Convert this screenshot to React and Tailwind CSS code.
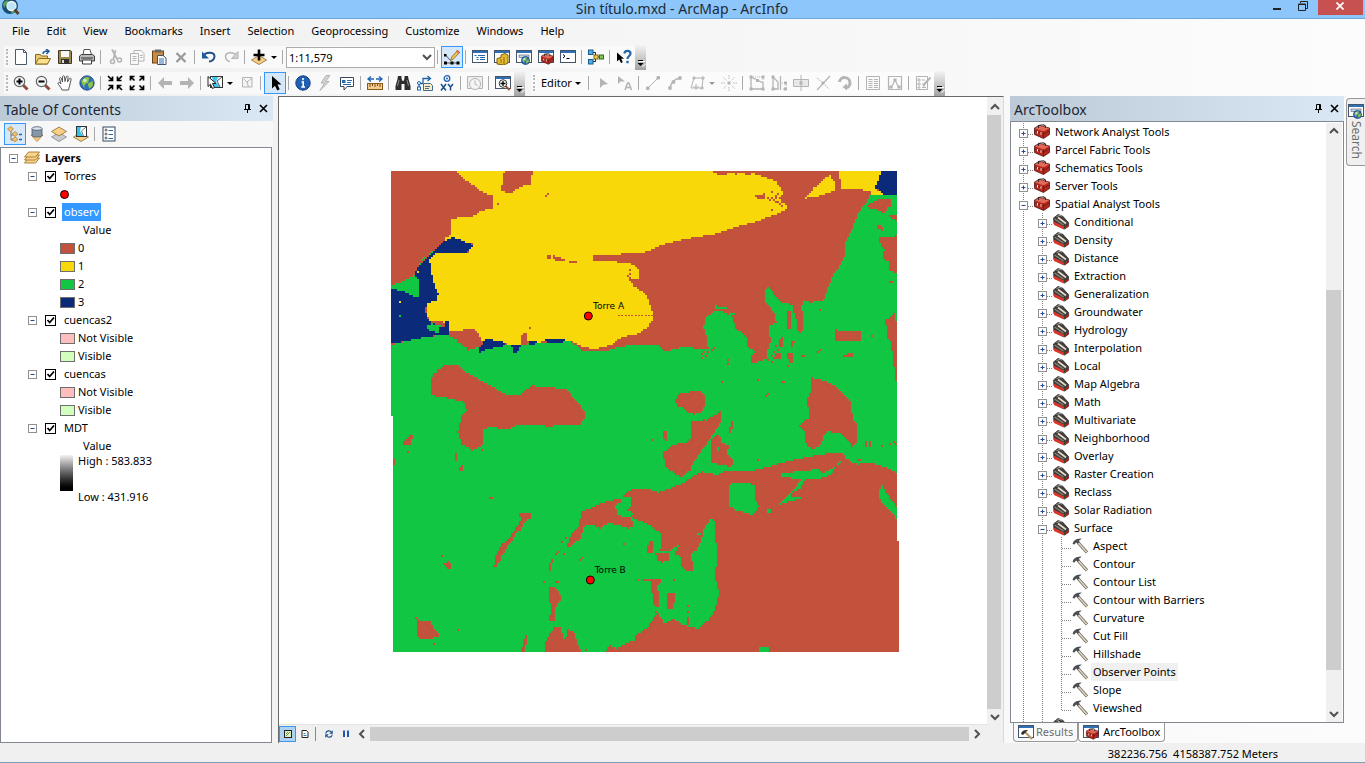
import { useState } from 'react';

const MENUS = ['File', 'Edit', 'View', 'Bookmarks', 'Insert', 'Selection', 'Geoprocessing', 'Customize', 'Windows', 'Help'];

const TOOLBOXES = ['Network Analyst Tools', 'Parcel Fabric Tools', 'Schematics Tools', 'Server Tools'];

const TOOLSETS = [
  'Conditional', 'Density', 'Distance', 'Extraction', 'Generalization', 'Groundwater', 'Hydrology',
  'Interpolation', 'Local', 'Map Algebra', 'Math', 'Multivariate', 'Neighborhood', 'Overlay',
  'Raster Creation', 'Reclass', 'Solar Radiation',
];

const SURFACE_TOOLS = [
  'Aspect', 'Contour', 'Contour List', 'Contour with Barriers', 'Curvature', 'Cut Fill', 'Hillshade',
  'Observer Points', 'Slope', 'Viewshed',
];

const OFF = '#b4b4b4';

/* small window used as a base by several toolbar icons */
const windowFrame = (
  <>
    <rect x="0.5" y="1.5" width="15" height="12" fill="#fff" stroke="#44546a" />
    <rect x="1" y="2" width="14" height="2" fill="#2f6fb5" />
  </>
);

const magnifier = (
  <>
    <path d="M10 10l4.5 4.500" stroke="#8f4a3a" strokeWidth="3" />
    <circle cx="6.500" cy="6.500" r="5.200" fill="#f3f6f8" stroke="#666" strokeWidth="1.200" />
  </>
);

const globe = (cx, cy, r) => (
  <>
    <circle cx={cx} cy={cy} r={r} fill="#2f6fc0" stroke="#1d4076" strokeWidth="0.8" />
    <path
      d={`M${cx - r * 0.8} ${cy - r * 0.2}q${r * 0.4} ${-r * 0.8} ${r * 1.1} ${-r * 0.6}l${-r * 0.1} ${r * 0.7}l${-r * 0.5} ${r * 0.3}l${-r * 0.1} ${r * 0.5}zM${cx + r * 0.1} ${cy + r * 0.1}l${r * 0.7} ${-r * 0.4}v${r * 0.7}l${-r * 0.5} ${r * 0.4}z`}
      fill="#8dc63f"
    />
    <circle cx={cx - r * 0.3} cy={cy - r * 0.35} r={r * 0.25} fill="#eaf6ff" opacity="0.7" />
  </>
);

const toolboxShape = (
  <>
    <path d="M0.500 4L5 1.500L15.500 4V10.500L9.500 14.500L0.500 10.500Z" fill="#b5281e" stroke="#4d1712" strokeWidth="0.8" />
    <path d="M0.800 4.200L9.500 7.500L15.200 4.200L5.500 1.800Z" fill="#e0695a" />
    <path d="M1 7L9.500 10.300L15.500 6.800M9.500 7.500V14" stroke="#6d1a14" fill="none" strokeWidth="0.9" />
    <path d="M4.500 4V1.500L9.500 0.800L11.500 2V4" stroke="#3a2a2a" fill="none" strokeWidth="1.100" />
    <path d="M3.500 7v2.500M7 8.200v2.500" stroke="#f4ded0" strokeWidth="1.100" />
  </>
);

const cursor = (x, y, fill) => (
  <path d={`M${x} ${y}v10l2.500-2.300l2 4.300l2-1l-2-4h3.500z`} fill={fill} />
);

const diamond = (y, fill) => (
  <path d={`M8 ${y - 4.5}L15.5 ${y}L8 ${y + 4.5}L0.5 ${y}Z`} fill={fill} stroke="#8a6a35" strokeWidth="0.8" />
);

const ICONS = {
  new: <path d="M2.500 0.500h8l3 3v12h-11zM10.500 0.500v3h3" fill="#fff" stroke="#4b5a6b" />,
  open: (
    <>
      <path d="M0.500 15V5.500h5l1 1.500h6V15z" fill="#e9c96b" stroke="#8a6a20" />
      <path d="M0.500 15l3-5.500h12L12.500 15z" fill="#f8e08e" stroke="#8a6a20" />
      <path d="M8 5c0-2 2-3 5-3M11 0l3 2.200L11.500 5" stroke="#1c5a9c" strokeWidth="1.500" fill="none" />
    </>
  ),
  save: (
    <>
      <path d="M1.500 1.500h12l1 1V14.500h-13z" fill="#9c8a4a" stroke="#3d3a2c" />
      <rect x="4" y="2" width="8" height="6" fill="#f5f5f5" />
      <rect x="4" y="10" width="8" height="4.500" fill="#2f2f2f" />
      <rect x="5" y="11" width="2" height="3" fill="#ddd" />
    </>
  ),
  print: (
    <>
      <path d="M4 6l1-5.500h6l1.500 5.500z" fill="#fff" stroke="#555" />
      <path d="M0.500 7l2-1.500h11l2 1.500v5h-15z" fill="#b9b9b9" stroke="#3d3d3d" />
      <path d="M3.500 11h9v4h-9z" fill="#fff" stroke="#3d3d3d" />
      <path d="M2 9h12" stroke="#333" />
    </>
  ),
  cut: (
    <>
      <path d="M5 0.500l5 9.500M8.500 1L6.500 10" stroke={OFF} strokeWidth="1.800" fill="none" />
      <circle cx="5.500" cy="12.500" r="2" fill="none" stroke={OFF} strokeWidth="1.500" />
      <circle cx="12.500" cy="11" r="2" fill="none" stroke={OFF} strokeWidth="1.500" />
    </>
  ),
  copy: <path d="M1.500 4.500h8v11h-8zM5 4V1.500h7l3 3V12h-5M3.500 7.500h4M3.500 9.500h4M3.500 11.500h4M11 6.500h2.500M11 8.500h2.500" fill="none" stroke={OFF} />,
  paste: (
    <>
      <rect x="1.500" y="2" width="11" height="12" fill="#c98b3f" stroke="#6b4316" />
      <rect x="4" y="0.500" width="6" height="3" fill="#666" />
      <path d="M6.500 6.500h5.500l3 2.500v6.500h-8.500z" fill="#fff" stroke="#41546b" />
      <path d="M8 10h5M8 12h5M8 14h5" stroke="#2f6fb5" />
    </>
  ),
  del: <path d="M3.500 4l9 9M12.500 4L3.500 13" stroke="#9a9a9a" strokeWidth="2.400" />,
  undo: (
    <>
      <path d="M2.500 6.500C5.500 2.500 13.500 3 13.500 7.500C13.500 10 11 12.500 8 12.500" stroke="#1e4f86" strokeWidth="1.900" fill="none" />
      <path d="M1 2.500V9.500H8z" fill="#1e5c9b" />
    </>
  ),
  redo: (
    <>
      <path d="M13.500 6.500C10.500 2.500 2.500 3 2.500 7.500C2.500 10 5 12.500 7 12.500" stroke={OFF} strokeWidth="1.500" fill="none" />
      <path d="M15 2.500V9.500H8.500z" fill="#cfcfcf" stroke={OFF} />
    </>
  ),
  add: (
    <>
      {diamond(11, '#f8cf83')}
      <path d="M8 0.500v11M2.500 6h11" stroke="#000" strokeWidth="2.600" />
    </>
  ),
  editTool: (
    <>
      <path d="M1.500 6l5.500 6M1.500 14h13" stroke="#555" fill="none" />
      <path d="M0 12.500h3v3H0zM6.500 12.500h3v3h-3zM12.500 12.500h3v3h-3zM0 5h2.500v2.500H0z" fill="#000" />
      <path d="M6.500 11.500l1.500-4L13.500 1.500l2 2L10 9.500z" fill="#f0c14f" stroke="#7a5a1a" strokeWidth="0.7" />
      <path d="M12.500 1.500l3 2.500" stroke="#d96b5b" strokeWidth="2" />
    </>
  ),
  tocWin: (
    <>
      {windowFrame}
      <path d="M2.500 6.500h2M6 6.500h7M4.500 8.500h2M8 8.500h5M4.500 10.500h2M8 10.500h5" stroke="#1f65b0" />
    </>
  ),
  catalogWin: (
    <>
      {windowFrame}
      <path d="M3 15V9.500l4-1V6l4-1.500L14 6v8l-4 2z" fill="#e7b92f" stroke="#7a5c0c" />
      <path d="M7 10v4M10 8v7" stroke="#8a6a10" />
    </>
  ),
  searchWin: (
    <>
      {windowFrame}
      <rect x="3" y="6" width="10" height="2.500" fill="#c5d9ec" stroke="#557" strokeWidth="0.6" />
      {globe(9.5, 11.5, 4)}
    </>
  ),
  toolboxWin: (
    <>
      {windowFrame}
      <g transform="translate(3 4) scale(0.78)">{toolboxShape}</g>
    </>
  ),
  python: (
    <>
      {windowFrame}
      <path d="M3 5.500l2 1.700L3 9" stroke="#000" fill="none" />
      <path d="M6.500 9.500h3" stroke="#000" />
    </>
  ),
  model: (
    <>
      <path d="M4 3.500h3.500V8H11M4 12.500h3.500V8" stroke="#222" fill="none" />
      <rect x="0.500" y="1" width="4.500" height="4.500" fill="#4fb0e8" stroke="#175a8c" />
      <rect x="0.500" y="10.500" width="4.500" height="4.500" fill="#4fb0e8" stroke="#175a8c" />
      <rect x="6" y="6" width="4" height="4" fill="#f2cf4a" stroke="#7d6410" />
      <rect x="11.500" y="6" width="4" height="4" fill="#7ec850" stroke="#376b1c" />
    </>
  ),
  help: (
    <>
      <path d="M1 3.500v9l2.200-2l1.800 3.500l1.800-0.800L5.200 9.800h2.800z" fill="#000" />
      <path d="M8.500 4.500C8.500 1 14.500 1 14.500 4.500C14.500 7 11.500 7 11.500 10" stroke="#2767a8" strokeWidth="2.200" fill="none" />
      <rect x="10.300" y="11.800" width="2.400" height="2.400" fill="#2767a8" />
    </>
  ),
  zoomIn: (
    <>
      {magnifier}
      <path d="M6.500 3.500v6M3.500 6.500h6" stroke="#000" strokeWidth="2" />
    </>
  ),
  zoomOut: (
    <>
      {magnifier}
      <path d="M3.500 6.500h6" stroke="#000" strokeWidth="2" />
    </>
  ),
  pan: (
    <path
      d="M5 15C4 12 1 9.500 0.800 8C1.500 6.500 3 8 4 9L2.500 3.500C3 2 4.200 2.500 4.600 4L5.500 7L5.500 1.500C6.200 0.300 7.400 0.500 7.500 2L8 6.500L9.300 1.500C10 0.500 11.300 1 11 2.500L10.500 7L12.500 3.500C13.500 2.700 14.500 3.500 14 5C13 8 12.500 12 11.500 15z"
      fill="#fff" stroke="#555"
    />
  ),
  globe: globe(8, 8, 7.2),
  fixedIn: (
    <path
      d="M1 1l4 4M15 1l-4 4M1 15l4-4M15 15l-4-4M5.500 1.500v4h-4M10.500 1.500v4h4M5.500 14.500v-4h-4M10.500 14.500v-4h4"
      stroke="#000" strokeWidth="1.700" fill="none"
    />
  ),
  fixedOut: (
    <path
      d="M1.500 1.500l4 4M14.500 1.500l-4 4M1.500 14.500l4-4M14.500 14.500l-4-4M1.500 5.500v-4h4M14.500 5.500v-4h-4M1.500 10.500v4h4M14.500 10.500v4h-4"
      stroke="#000" strokeWidth="1.700" fill="none"
    />
  ),
  back: <path d="M1 8l6-6v4h8v4H7v4z" fill={OFF} />,
  fwd: <path d="M15 8L9 2v4H1v4h8v4z" fill={OFF} />,
  select: (
    <>
      <rect x="3.500" y="1.500" width="12" height="11" fill="#fff" stroke="#333" />
      <path d="M5 2h6l-2 5l4 5H7z" fill="#39c6e8" />
      <path d="M15 2l-5 4l3 6" stroke="#555" fill="none" />
      <g stroke="#222" strokeWidth="1">{cursor(1, 1.5, '#fff')}</g>
    </>
  ),
  clearSel: <path d="M3.500 2.500h9.500v9.500h-9.500zM5 4l3 3l5-4M8 7l1.500 5" fill="#f3f3f3" stroke={OFF} />,
  pointer: <path d="M5 1v12.500l3-2.700l2.300 4.700l2.400-1.200L10.400 9.500h4.100z" fill="#000" />,
  info: (
    <>
      <circle cx="8" cy="8" r="7.200" fill="#1f5fb4" stroke="#123c7c" />
      <path d="M8 3v2.200M6.500 7h1.700v5M6.200 12h3.800" stroke="#fff" strokeWidth="1.600" fill="none" />
    </>
  ),
  bolt: <path d="M9 0.500L4 8h3.500L3 15.500L12 6.500H8.500L13 0.500z" fill="#d3d3d3" stroke={OFF} />,
  popup: (
    <>
      <path d="M1.500 2.500h13v9H8l-3 3.500v-3.500H1.500z" fill="#fff" stroke="#34495e" />
      <rect x="3" y="5" width="3.500" height="3" fill="#2a6bb0" />
      <path d="M8 5.500h5M8 7.500h4M4 9.500h8" stroke="#2a6bb0" />
    </>
  ),
  measure: (
    <>
      <path d="M1 4h6M15 4H9M4 1.500L1 4l3 2.500M12 1.500L15 4l-3 2.500" stroke="#1f65b0" strokeWidth="1.400" fill="none" />
      <rect x="0.500" y="8.500" width="15" height="6" fill="#f2cd8d" stroke="#8a5c1c" />
      <path d="M3 9v3M5.500 9v2M8 9v3M10.500 9v2M13 9v3" stroke="#7a4c12" />
    </>
  ),
  find: (
    <>
      <path d="M3 1h3.500v2.500L7.500 6h1l1-2.500V1H13l0.500 3L15.500 11v4h-6V9h-3v6h-6v-4L2.500 4z" fill="#2d2d2d" />
      <path d="M4 5L2.500 11M12 5l1.500 6" stroke="#8b8b8b" />
    </>
  ),
  route: (
    <>
      <path d="M2 13V8.500h4V3.500h7M10.500 1L13.500 3.500L10.500 6" stroke="#1f65a8" fill="none" strokeWidth="1.300" />
      <rect x="0.500" y="12" width="3" height="3" fill="#fff" stroke="#1f65a8" />
      <circle cx="2" cy="8" r="1.500" fill="#fff" stroke="#1f65a8" />
      <path d="M6.500 8.500h7l2 2v5h-9zM8 11.500h5M8 13.500h4" fill="#f7ecc8" stroke="#4a6a8a" />
    </>
  ),
  xy: (
    <>
      <circle cx="8" cy="3.500" r="2.800" fill="none" stroke="#1f65b0" strokeWidth="1.300" />
      <circle cx="8" cy="3.500" r="1" fill="#1f65b0" />
      <path d="M2 9l5 6.500M7 9l-5 6.500M9 9l2.500 3v3.500M14 9l-2.500 3" stroke="#1c4f8c" strokeWidth="1.500" fill="none" />
    </>
  ),
  time: (
    <>
      <path d="M0.500 1.500h15v12H0.500z" fill="#eee" stroke={OFF} />
      <circle cx="8" cy="9" r="5.500" fill="#f4f4f4" stroke={OFF} />
      <path d="M8 5.500V9l2.500 1.500" stroke={OFF} fill="none" />
    </>
  ),
  viewer: (
    <>
      {windowFrame}
      <path d="M10.500 11l4 4" stroke="#a0522d" strokeWidth="2" />
      <circle cx="8" cy="8.500" r="3.800" fill="#fff" stroke="#333" />
      <path d="M5.500 8.500h5M8 6v5" stroke="#000" strokeWidth="1.300" />
    </>
  ),
  eArrow: <path d="M5 3v10l3-3l5-1z" fill={OFF} />,
  eArrowA: (
    <>
      <path d="M1 1v8l2.500-2.500H8z" fill={OFF} />
      <path d="M8 15l2.500-7h1.500l2.500 7M9 12.500h4.500" stroke={OFF} strokeWidth="1.500" fill="none" />
    </>
  ),
  line: <path d="M3 13L13 3M1.500 12h2.500v2.500H1.500zM12 1.500h2.500V4H12z" stroke={OFF} fill={OFF} />,
  arc: <path d="M3 13C4 8 7 4 13 3M2 12h2v2H2zM12 2h2v2h-2zM5.500 6h2v2h-2z" stroke={OFF} fill="none" strokeWidth="1.400" />,
  trace: <path d="M5 3h9l-1 10H2zM4 2h2v2H4zM13 2h2v2h-2zM12 12h2v2h-2zM7 9v6M4 12h6" stroke={OFF} fill="none" />,
  point: (
    <>
      <path d="M8 0v4M8 12v4M0 8h4M12 8h4M2.500 2.500l3 3M13.500 2.500l-3 3M2.500 13.500l3-3M13.500 13.500l-3-3" stroke={OFF} strokeDasharray="1.500 1" />
      <rect x="6.500" y="6.500" width="3" height="3" fill={OFF} />
    </>
  ),
  vertices: (
    <>
      <path d="M2 2l12 6v6H2z" stroke={OFF} fill="none" strokeWidth="1.300" />
      <path d="M2 2h12v6" stroke={OFF} fill="none" strokeDasharray="1 1" />
      <path d="M0.500 0.500h3v3h-3zM12.500 0.500h3v3h-3zM0.500 12.500h3v3h-3zM12.500 12.500h3v3h-3zM7 4h3v3H7z" fill={OFF} />
    </>
  ),
  reshape: (
    <>
      <path d="M2 2v12h5V7zM9.500 1v14" stroke={OFF} fill="none" strokeWidth="1.300" />
      <path d="M11 8h4v6h-4" stroke={OFF} fill="none" strokeDasharray="1 1" />
      <path d="M0.500 0.500h3v3h-3zM0.500 12.500h3v3h-3zM13 12.500h3v3h-3zM13 6.500h3v3h-3z" fill={OFF} />
    </>
  ),
  cutPoly: (
    <>
      <path d="M0.500 4.500h15v7h-15zM8 0v16" stroke={OFF} fill="#e8e8e8" />
      <rect x="6.500" y="6.500" width="3" height="3" fill={OFF} />
    </>
  ),
  split: (
    <>
      <path d="M2 15L15 1" stroke={OFF} strokeWidth="1.200" />
      <path d="M2 3l4 3.500M10 10l4 4" stroke={OFF} strokeDasharray="2 1" />
      <rect x="6.500" y="6.500" width="3" height="3" fill={OFF} />
    </>
  ),
  rotate: (
    <>
      <path d="M2.500 7C3 1 13 1 13 8C13 11 11 12.500 9 12.500" stroke={OFF} strokeWidth="3" fill="none" />
      <path d="M10 8.500v7L5.500 12z" fill={OFF} />
    </>
  ),
  attrs: <path d="M1.500 1.500h13v13h-13zM3.500 4.500h4M9 4.500h4M3.500 6.500h4M9 6.500h4M3.500 8.500h4M9 8.500h4M3.500 10.500h4M9 10.500h4M3.500 12.500h4M9 12.500h4" stroke={OFF} fill="none" />,
  sketch: <path d="M1.500 1.500h13v13h-13zM3 12h1.500l3.500-7l3.500 7H13M7 4h2v2H7zM3 11h2v2H3zM11 11h2v2h-2z" stroke={OFF} fill="none" strokeWidth="1.200" />,
  create: (
    <>
      <path d="M1.500 1.500h11v13h-11zM3 4h2v2H3zM3 8h2v2H3zM3 12h2v1H3zM7 5h3M7 9h2M7 12.500h4" stroke={OFF} fill="none" />
      <path d="M15.500 2.500L9.500 9l-1 2.500" stroke={OFF} strokeWidth="2" />
    </>
  ),
  listOrder: (
    <>
      <path d="M4 5v9h4M4 9h4" stroke="#777" fill="none" />
      <path d="M3.500 0.500l3 2.500l-3 2.500l-3-2.500zM8 5.500l3 2.500l-3 2.500l-3-2.500zM8 10.800l3 2.500l-3 2.500l-3-2.500z" fill="#f3c06d" stroke="#a97a2d" strokeWidth="0.7" />
      <path d="M12 8.500h3M12 13.500h3" stroke="#1f65b0" strokeWidth="1.400" />
    </>
  ),
  listSource: (
    <>
      <path d="M2 9h12l-6 6.500z" fill="#f5c97e" stroke="#a97a2d" strokeWidth="0.7" />
      <path d="M3 2.500v7c0 2 10 2 10 0v-7" fill="#8796a8" stroke="#48586b" strokeWidth="0.8" />
      <ellipse cx="8" cy="2.500" rx="5" ry="1.800" fill="#dfe6ee" stroke="#48586b" strokeWidth="0.8" />
    </>
  ),
  listVisible: (
    <>
      <path d="M8 6.500l7.500 4.500L8 15.500L0.500 11z" fill="#c9ccd1" stroke="#777" strokeWidth="0.7" />
      {diamond(5.5, '#f8cf83')}
    </>
  ),
  listSelected: (
    <>
      {diamond(11, '#f8cf83')}
      <rect x="3.500" y="0.500" width="10" height="10" fill="#fff" stroke="#333" />
      <path d="M4 1h4l-1 4l3 5H4z" fill="#2fc3ea" />
      <path d="M13 1L8.500 5l2 5" stroke="#777" fill="none" />
    </>
  ),
  listOptions: (
    <>
      <rect x="2" y="1" width="12" height="14" fill="#fff" stroke="#34495e" />
      <circle cx="5" cy="4" r="1" fill="none" stroke="#333" strokeWidth="0.8" />
      <circle cx="5" cy="8" r="1" fill="none" stroke="#333" strokeWidth="0.8" />
      <circle cx="5" cy="12" r="1" fill="none" stroke="#333" strokeWidth="0.8" />
      <path d="M7.500 4.500H12M7.500 8.500H12M7.500 12.500H12" stroke="#2a6bb0" />
    </>
  ),
  layers: (
    <>
      {[10, 7, 4].map((y) => (
        <path key={y} d={`M0.500 ${y + 3}L4.500 ${y - 2}H15.500L11.500 ${y + 3}Z`} fill="#f8d48c" stroke="#a5762a" strokeWidth="0.9" />
      ))}
    </>
  ),
  toolbox: toolboxShape,
  toolset: (
    <>
      <path d="M0.500 4L5 0.500L9.500 2L15.500 8.500V12L11.500 15L1 10z" fill="#3f3c3a" stroke="#2a2624" strokeWidth="0.7" />
      <path d="M0.500 7.500L11 12.500V15.500L1 11z" fill="#d5392c" />
      <path d="M12 12.800L15.800 10.500V12.500L12 15.200z" fill="#a1261c" />
      <path d="M1.500 5L10.500 11" stroke="#8d8882" strokeWidth="1.100" />
      <path d="M5 3.500L13 9.500" stroke="#e6ddcb" strokeWidth="1.600" />
      <path d="M3.500 2.500l3.500-1.200l2 1" stroke="#9a9a9a" fill="none" />
    </>
  ),
  hammer: (
    <>
      <path d="M6 4.500L15 14.500" stroke="#6d675c" strokeWidth="3" />
      <path d="M6.500 5L14.800 14.200" stroke="#e3d9c4" strokeWidth="1.500" />
      <path d="M0.500 6L1.500 3.500C3 1.500 5 0.500 9.500 0.500L8.500 1.800L7 2.500L7.500 4.500L5.500 5.500L4 4.500L2.500 6.500z" fill="#4a4f55" />
    </>
  ),
  resultsWin: (
    <>
      {windowFrame}
      <path d="M6.500 7.500L14 15" stroke="#b99a68" strokeWidth="2.200" />
      <path d="M3 10c0.500-3 3-4.500 7-4l-5 5z" fill="#333" />
    </>
  ),
  dataView: (
    <>
      <rect x="1" y="1" width="14" height="14" fill="#e2eec0" stroke="#222" strokeWidth="2" />
      <path d="M4 12L12 4M4 8l4-4" stroke="#5c9c50" strokeWidth="2" />
    </>
  ),
  layoutView: (
    <>
      <path d="M2 1h9l3 3.500V15H2z" fill="#fff" stroke="#222" strokeWidth="2" />
      <path d="M5 7h4M5 11h6" stroke="#2a7ab0" strokeWidth="2" />
    </>
  ),
  refresh: (
    <>
      <path d="M1.500 7C2 1 10 0 13 4.500M14.500 9C14 15 6 16 3 11.500" stroke="#1a4d85" strokeWidth="2.200" fill="none" />
      <path d="M15.500 0.500v7h-7zM0.500 15.500v-7h7z" fill="#1a4d85" />
    </>
  ),
  pause: <path d="M4 1v13M12 1v13" stroke="#2358b0" strokeWidth="4" />,
};

function Icon({ name, className = 'h-4 w-4' }) {
  return (
    <svg viewBox="0 0 16 16" fill="none" className={`shrink-0 ${className}`} aria-hidden="true">
      {ICONS[name]}
    </svg>
  );
}

function ToolButton({ name, active }) {
  return (
    <button
      type="button"
      aria-label={name}
      className={`flex h-[22px] w-[22px] shrink-0 items-center justify-center border ${
        active ? 'border-[#3399ff] bg-[#d6e8f8]' : 'border-transparent'
      }`}
    >
      <Icon name={name} />
    </button>
  );
}

function Sep() {
  return (
    <span className="flex h-[22px] w-1.5 shrink-0 items-center pl-0.5">
      <span className="h-3.5 w-px bg-[#a9a9a9]" />
    </span>
  );
}

function Grip() {
  return <span className="mr-0.5 h-4 w-0 shrink-0 border-l-2 border-dotted border-[#b9b9b9]" />;
}

function Caret({ color = '#000' }) {
  return (
    <svg viewBox="0 0 8 16" className="h-4 w-2 shrink-0" aria-hidden="true">
      <path d="M1 7h6L4 10z" fill={color} />
    </svg>
  );
}

function Overflow() {
  return (
    <button type="button" aria-label="Toolbar options" className="flex h-[25px] w-[11px] shrink-0 items-end bg-linear-to-b from-[#f4f4f4] to-[#a3a3a3]">
      <svg viewBox="0 0 11 12" className="h-3 w-[11px]">
        <path d="M4 3.500h6M7.500 9l3-3" stroke="#fff" />
        <path d="M3 2.500h5" stroke="#000" />
        <path d="M2.500 5h6L5.500 8z" fill="#000" />
      </svg>
    </button>
  );
}

function tools(items, activeName) {
  return items.map((name, i) => (name === '|' ? <Sep key={i} /> : <ToolButton key={i} name={name} active={name === activeName} />));
}

function Chevron({ dir }) {
  const d = {
    up: 'M4 10l4-4l4 4',
    down: 'M4 6l4 4l4-4',
    left: 'M10 4l-4 4l4 4',
    right: 'M6 4l4 4l-4 4',
  }[dir];
  return (
    <svg viewBox="0 0 16 16" className="h-4 w-4 shrink-0" aria-hidden="true">
      <path d={d} fill="none" stroke="#505050" strokeWidth="2" />
    </svg>
  );
}

function PanelHeader({ title }) {
  return (
    <header className="flex h-[25px] shrink-0 items-center bg-linear-to-r from-[#bccad8] to-[#dae7f4] pl-1 pr-0.5">
      <h2 className="flex-1 pt-0.5 text-sm text-[#1c2733]">{title}</h2>
      <button type="button" aria-label={`Pin ${title}`} className="flex h-4 w-4 items-center justify-center">
        <svg viewBox="0 0 9 9" className="h-[9px] w-[9px]" fill="none" stroke="#000">
          <path d="M2.500 5V0.500h4V5M5.500 0.500V5M1 5.500h7M4.500 5.500V9" />
        </svg>
      </button>
      <button type="button" aria-label={`Close ${title}`} className="flex h-4 w-4 items-center justify-center">
        <svg viewBox="0 0 9 9" className="h-[9px] w-[9px]" fill="none" stroke="#000" strokeWidth="1.600">
          <path d="M1 1l7 7M8 1L1 8" />
        </svg>
      </button>
    </header>
  );
}

function ExpandBox({ open, x = 0.5, y = 0.5 }) {
  return (
    <g>
      <rect x={x} y={y} width="8" height="8" fill="#fff" stroke="#919191" />
      <path d={`M${x + 2} ${y + 4}h4`} stroke="#26479c" />
      {!open && <path d={`M${x + 4} ${y + 2}v4`} stroke="#26479c" />}
    </g>
  );
}

function Expander({ label }) {
  return (
    <button type="button" aria-label={`Collapse ${label}`} className="h-[9px] w-[9px] shrink-0">
      <svg viewBox="0 0 9 9" className="h-[9px] w-[9px]"><ExpandBox open /></svg>
    </button>
  );
}

function LayerRow({ name, selected }) {
  const [visible, setVisible] = useState(true);
  return (
    <li className="flex h-[18px] items-center pl-[27px]">
      <Expander label={name} />
      <label className="ml-2 flex items-center">
        <input type="checkbox" checked={visible} onChange={() => setVisible(!visible)} className="sr-only" />
        <span className="flex h-[11px] w-[11px] items-center justify-center border border-black bg-white">
          {visible && (
            <svg viewBox="0 0 9 9" className="h-[9px] w-[9px]">
              <path d="M1.500 4l2.200 2.500L8 1.500" fill="none" stroke="#000" strokeWidth="1.800" />
            </svg>
          )}
        </span>
        <span className={`ml-1.5 h-[18px] px-0.5 leading-[18px] ${selected ? 'bg-[#3399ff] text-white' : ''}`}>{name}</span>
      </label>
    </li>
  );
}

function LegendRow({ swatch, label }) {
  return (
    <li className="flex h-[18px] items-center pl-[59px]">
      <span className={`mr-[3px] h-[11px] w-[15px] border border-[#6e6e6e] ${swatch}`} />
      {label}
    </li>
  );
}

function TableOfContents() {
  return (
    <aside className="flex w-[273px] shrink-0 flex-col">
      <PanelHeader title="Table Of Contents" />
      <div className="flex h-[26px] shrink-0 items-center bg-[#f7f7f7] pl-1">
        {tools(['listOrder', 'listSource', 'listVisible', 'listSelected', '|', 'listOptions'], 'listOrder')}
      </div>
      <div className="mr-px flex-1 border border-[#828790] bg-white">
        <div className="mt-px flex h-[18px] items-center pl-2 font-bold">
          <Expander label="Layers" />
          <Icon name="layers" className="ml-1.5 mr-[5px] h-4 w-4" />
          Layers
        </div>
        <ul>
          <LayerRow name="Torres" />
          <li className="flex h-[18px] items-center pl-[59px]">
            <span className="h-[9px] w-[9px] rounded-full border border-black bg-[#ff0000]" />
          </li>
          <LayerRow name="observ" selected />
          <li className="h-[18px] pl-[82px] leading-[18px]">Value</li>
          <LegendRow swatch="bg-[#c3523c]" label="0" />
          <LegendRow swatch="bg-[#f9d80a]" label="1" />
          <LegendRow swatch="bg-[#11c642]" label="2" />
          <LegendRow swatch="bg-[#0b2a7a]" label="3" />
          <LayerRow name="cuencas2" />
          <LegendRow swatch="bg-[#ffbebe]" label="Not Visible" />
          <LegendRow swatch="bg-[#d3ffbe]" label="Visible" />
          <LayerRow name="cuencas" />
          <LegendRow swatch="bg-[#ffbebe]" label="Not Visible" />
          <LegendRow swatch="bg-[#d3ffbe]" label="Visible" />
          <LayerRow name="MDT" />
          <li className="h-[18px] pl-[82px] leading-[18px]">Value</li>
          <li className="flex pl-[59px]">
            <span className="mr-[5px] h-9 w-[13px] bg-linear-to-b from-[#f4f4f4] to-black" />
            <span className="flex flex-col gap-6 leading-3">
              <span>High : 583.833</span>
              <span>Low : 431.916</span>
            </span>
          </li>
        </ul>
      </div>
    </aside>
  );
}

const CELL = 6;
const snap = (v) => Math.round(v / CELL) * CELL;

// Turns lists of "x,y" corners into stepped outlines that follow the raster cells
function raster(...shapes) {
  return shapes
    .map((shape) => {
      const pts = shape.split(' ').map((p) => p.split(',').map(Number));
      let d = `M${snap(pts[0][0])} ${snap(pts[0][1])}`;
      pts.forEach(([x, y], i) => {
        const [nx, ny] = pts[(i + 1) % pts.length];
        const steps = Math.max(1, Math.round(Math.max(Math.abs(nx - x), Math.abs(ny - y)) / CELL));
        for (let s = 1; s <= steps; s++) {
          d += `H${snap(x + ((nx - x) * s) / steps)}V${snap(y + ((ny - y) * s) / steps)}`;
        }
      });
      return `${d}Z`;
    })
    .join('');
}

// Single stray cells, given as "x,y" pairs
const specks = (list) =>
  list.split(' ').map((p) => p.split(',')).map(([x, y]) => `M${snap(x)} ${snap(y)}h6v6h-6z`).join('');

const RED = '#c3523c';
const GREEN = '#11c642';
const YELLOW = '#f9d80a';
const BLUE = '#0b2a7a';

function ViewshedMap() {
  return (
    <svg viewBox="18 18 1524 1443" className="h-[481px] w-[508px] shrink-0" shapeRendering="crispEdges" role="img" aria-label="Viewshed map">
      <path d="M18 18H1536V1128H1542V1461H24V753H18Z" fill={GREEN} />

      {/* north: hidden area behind the hills */}
      <path
        fill={RED}
        d={raster(
          '18,18 1536,18 1536,92 1455,92 1440,120 1425,135 1400,200 1377,240 1377,275 1362,310 1345,330 1330,365 1316,408 1278,412 1260,402 1245,430 1256,445 1256,495 1240,510 1236,460 1225,440 1225,418 1190,412 1165,385 1153,368 1138,370 1138,400 1145,420 1170,450 1173,475 1155,480 1150,510 1158,530 1148,560 1145,580 1122,590 1098,595 1096,570 1110,560 1085,545 1083,515 1055,490 1040,450 995,435 960,460 955,490 968,520 965,550 885,548 845,560 820,540 765,538 710,545 660,560 600,560 560,530 285,545 250,555 230,535 185,508 100,520 18,540',
        )}
      />
      <path
        fill={YELLOW}
        d={raster(
          '210,18 228,36 250,55 275,70 295,85 323,90 323,132 300,135 280,142 265,157 240,157 205,160 196,170 200,212 180,225 262,237 250,265 155,265 133,290 140,330 148,360 160,390 155,408 130,412 125,435 130,465 165,470 190,485 192,498 265,492 280,510 288,530 350,530 380,542 410,540 405,515 415,505 430,535 500,527 560,530 590,545 630,552 655,545 680,538 690,525 715,515 735,510 750,512 755,505 780,490 803,460 803,440 785,390 765,375 750,365 738,350 730,340 760,340 762,310 740,295 705,292 680,285 620,285 625,270 680,268 765,265 825,240 900,222 995,205 1045,187 1105,172 1165,150 1200,135 1205,118 1195,105 1185,95 1195,75 1180,60 1170,45 1135,35 1115,28 1105,22 1090,30 1060,22 1005,30 985,18',
          '1255,102 1280,75 1300,55 1332,28 1348,52 1350,78 1310,92',
          '1362,18 1488,18 1482,50 1468,72 1495,80 1497,90 1465,90 1450,76 1370,70',
        )}
      />
      <path
        fill={RED}
        d={raster(
          '357,18 443,18 438,60 405,65 375,85 348,75',
          '485,267 497,267 497,280 485,278',
          '503,272 542,282 542,290 503,284',
          '553,290 573,290 573,296 553,296',
          '1110,90 1140,86 1142,100 1120,100',
          '405,510 424,505 424,535 412,532',
        )}
      />
      <path
        fill={RED}
        d={specks('481,90 487,84 336,112 433,488 732,312 732,324 726,330 732,336 1146,96 1152,102 1158,96 1164,102 1170,108 1176,108 1182,114 1188,120 1176,84 1182,96 1170,90 1158,78 1188,108 1158,132 1170,96 1008,24 1050,24 1152,36')}
      />
      <path d="M699 451h120" stroke={RED} strokeWidth="3" strokeDasharray="6 4" />

      {/* seen from both towers */}
      <path
        fill={BLUE}
        d={raster(
          '18,372 60,378 80,392 100,398 98,345 88,330 100,300 130,270 165,235 205,216 225,228 262,240 260,254 240,265 155,265 133,290 140,330 148,360 160,390 155,408 130,412 120,440 130,470 150,480 175,490 180,468 190,470 190,508 130,515 80,525 18,538',
          '280,565 282,545 300,522 325,525 365,535 360,542 310,552',
          '380,542 412,540 395,565 388,565',
          '432,530 460,530 450,540 432,540',
          '482,522 525,522 550,528 530,536 500,536 482,528',
          '1488,18 1536,18 1536,95 1500,92 1485,75 1468,70 1480,42',
        )}
      />
      <path
        fill={GREEN}
        d={raster(
          '18,360 50,350 85,332 100,345 100,395 80,390 60,378 18,372',
          '100,300 130,265 180,225 160,245 110,290',
          '123,485 140,475 165,485 162,502 145,500',
          '1455,92 1536,92 1536,130 1480,130 1450,130',
          '992,428 1025,428 1025,434 992,434',
          '1030,444 1052,444 1052,450 1030,450',
        )}
      />
      <path fill={GREEN} d={specks('42,450 990,420 1206,420 1218,426 1212,438 1224,450 1218,462 1230,468 1176,468 1182,480 1092,560 1080,552 1098,552')} />
      <path fill={YELLOW} d={specks('42,408 96,318 178,218')} />
      <path
        fill={RED}
        d={raster(
          '150,470 165,470 165,480 150,478',
          '1448,118 1475,102 1515,100 1520,118 1500,145 1480,135 1450,130',
          '1512,150 1536,148 1536,165 1518,162',
          '1475,180 1495,188 1495,195 1478,186',
          '1482,218 1536,212 1536,325 1515,315 1510,290 1492,275 1498,250 1485,232',
          '1510,345 1521,345 1521,356 1510,356',
          '1492,465 1515,455 1530,440 1533,475 1536,650 1530,640 1525,575 1515,530 1505,510 1508,480',
          '1347,493 1360,500 1428,498 1425,530 1370,528 1347,525',
          '1372,568 1405,562 1405,574 1372,578',
          '1208,565 1224,560 1222,592 1210,595',
          '1208,440 1216,440 1216,490 1208,490',
          '1220,530 1228,535 1222,545 1215,540',
          '1186,512 1195,515 1192,545 1180,552',
          '1170,565 1188,565 1188,584 1165,580',
          '1250,568 1262,568 1262,574 1250,574',
          '975,548 982,560 975,565',
        )}
      />
      <path
        fill={RED}
        d={specks('1302,430 1008,645 1118,640 1140,688 1146,684 1190,645 1196,650 945,566 954,560 960,572 950,578 966,558 1297,556 1303,550 1230,402 1170,540 1176,552 1164,556 1158,570 1206,600 1028,584 1024,596 1455,512 1158,586 1146,584 966,546 984,546')}
      />

      {/* centre: scattered hidden slopes */}
      <path
        fill={RED}
        d={raster(
          '140,690 135,670 142,625 175,602 215,600 240,622 300,655 365,692 400,688 440,662 540,672 585,725 600,745 602,762 585,780 545,778 490,785 455,778 400,780 370,792 315,787 295,795 292,840 265,855 230,835 218,800 230,750 245,735 240,712 205,702',
          '870,700 880,685 915,680 930,675 955,685 962,720 950,745 930,748 905,740 900,730 875,722',
          '1278,638 1310,645 1345,660 1375,690 1398,715 1402,765 1418,780 1418,830 1405,845 1370,805 1330,800 1312,815 1310,840 1290,852 1265,845 1258,795 1240,778 1270,755 1272,730 1265,705 1275,680',
          '985,738 1008,738 1008,775 985,810 950,860 915,915 895,938 865,920 840,905 835,860 860,840 900,832 915,815 918,770 950,765 975,750',
          '980,820 990,808 1002,812 1008,835 1030,840 1028,870 1045,890 1040,905 1010,898 980,895',
          '835,795 845,795 845,825 830,815',
          '800,822 810,830 805,838',
          '1040,770 1046,780 1032,815 1030,795',
          '55,830 70,812 87,812 75,840 55,840',
          '24,882 33,880 30,900 24,900',
          '210,862 218,862 218,885 210,880',
          '220,905 232,895 234,915 220,915',
          '312,997 324,997 324,1003 312,1003',
          '403,1042 435,1042 437,1060 420,1070 405,1100 385,1120 372,1142 358,1165 345,1185 335,1208 325,1205 332,1170 345,1142 368,1120 385,1095 400,1075 408,1060',
          '172,1192 185,1190 200,1202 198,1210 180,1208',
          '93,1360 110,1368 138,1368 140,1382 150,1400 165,1405 162,1415 145,1420 105,1420 93,1405',
          '420,1412 426,1425 418,1461 406,1461',
          '498,1182 504,1190 495,1220 490,1210',
          '490,1268 505,1265 520,1280 528,1305 515,1320 508,1345 508,1370 490,1370 497,1340 498,1315 490,1305',
          '480,1461 480,1425 505,1383 525,1390 535,1420 548,1415 543,1390 565,1400 575,1435 588,1461',
          '1440,830 1444,830 1444,845 1440,845',
          '1450,830 1456,830 1456,845 1450,845',
          '1418,880 1428,885 1422,895',
        )}
      />
      <path
        fill={RED}
        d={specks('66,858 216,1392 510,1164 516,1156 536,1164 528,1125 540,1116 582,1184 588,1178 472,1245 510,1250 516,1248 168,1170 144,1434 90,1356 1118,884 1488,842 1512,832 1524,826 1530,834 712,1136 598,1450 672,1442 286,852')}
      />
      <path
        fill={GREEN}
        d={raster(
          '925,745 960,765 1000,740 965,740 950,748 930,742',
          '998,845 1003,845 1003,858 998,858',
        )}
      />

      {/* south east: hidden area below the ridge */}
      <path
        fill={RED}
        d={raster(
          '715,990 735,970 780,970 815,983 850,970 895,953 915,935 945,920 995,930 1015,920 1095,918 1165,900 1215,887 1285,872 1345,862 1375,868 1390,890 1415,897 1465,895 1505,910 1536,928 1536,1128 1542,1128 1542,1461 660,1461 665,1445 690,1450 745,1425 755,1405 785,1385 815,1345 835,1375 865,1360 890,1380 915,1385 935,1393 965,1365 990,1330 1002,1275 990,1235 995,1175 990,1065 980,1057 955,1100 950,1120 935,1155 915,1165 925,1215 905,1218 890,1200 890,1175 870,1165 880,1140 860,1155 830,1155 827,1105 795,1080 765,1065 740,1055 742,1085 730,1092 710,1080 670,1075 650,1090 620,1078 592,1085 590,1120 575,1130 560,1148 548,1145 550,1115 580,1080 590,1040 640,1015 705,998',
        )}
      />
      <path
        fill={GREEN}
        d={raster(
          '690,1020 705,1008 710,995 738,997 740,1020 728,1040 742,1052 730,1058 700,1050',
          '1035,955 1095,955 1110,965 1110,1005 1122,1025 1105,1050 1055,1035 1030,1020 1032,975',
          '1185,925 1240,918 1295,913 1310,925 1340,910 1372,880 1390,872 1350,905 1340,930 1320,938 1260,945 1245,970 1215,985 1220,995 1255,998 1178,1022 1205,990 1235,960 1245,940 1200,938',
          '1490,957 1500,985 1536,1030 1536,1063 1515,1035 1485,1000 1483,970',
          '1147,1033 1155,1033 1155,1046 1147,1046',
          '1123,1443 1149,1443 1149,1461 1123,1461',
          '938,1102 950,1100 950,1112 938,1112',
        )}
      />
      <path
        fill={RED}
        d={raster(
          '790,1127 798,1125 805,1140 803,1165 785,1160',
          '812,1165 855,1165 852,1185 830,1195 815,1180',
          '765,1243 830,1243 830,1255 818,1265 822,1325 808,1325 800,1280 800,1248',
          '846,1282 868,1282 870,1305 862,1325 846,1325',
          '846,1328 862,1328 862,1334 846,1334',
          '908,1355 914,1355 914,1380 908,1380',
        )}
      />
      <path fill={RED} d={specks('908,1320 908,1340 866,1242 808,1338 822,1152 1008,1186')} />
      <path d="M750 1245h30" stroke={RED} strokeWidth="5" strokeDasharray="4 5" />

      <g shapeRendering="auto" stroke="#000" strokeWidth="3" fill="#ff0000">
        <circle cx="610" cy="453" r="12" />
        <circle cx="616" cy="1245" r="12" />
      </g>
      <g fontFamily="DejaVu Sans, Verdana, sans-serif" fontSize="27" fill="#000">
        <text x="624" y="432">Torre A</text>
        <text x="629" y="1224">Torre B</text>
      </g>
    </svg>
  );
}

function MapView() {
  return (
    <main className="ml-[5px] mr-1.5 flex min-w-0 flex-1 flex-col border-l border-t border-[#696969] border-r border-r-[#d9d9d9]">
      <div className="flex min-h-0 flex-1">
        <div className="flex min-w-0 flex-1 overflow-hidden border-b border-[#e3e3e3] bg-white pl-28 pt-[74px]">
          <ViewshedMap />
        </div>
        <div className="flex w-4 shrink-0 flex-col bg-[#f0f0f0] pt-0.5">
          <Chevron dir="up" />
          <div className="mr-0.5 flex-1 bg-[#cdcdcd]" />
          <Chevron dir="down" />
        </div>
      </div>
      <div className="flex h-[18px] shrink-0 items-center bg-[#f0f0f0]">
        <button type="button" aria-label="Data view" className="flex h-4 w-[17px] items-center justify-center border border-[#3f96e6] bg-[#aed2f4]">
          <Icon name="dataView" className="h-2 w-2" />
        </button>
        <button type="button" aria-label="Layout view" className="flex h-4 w-[17px] items-center justify-center">
          <Icon name="layoutView" className="h-2 w-2" />
        </button>
        <span className="mx-0.5 h-3.5 w-px bg-[#8a8a8a]" />
        <button type="button" aria-label="Refresh" className="flex h-4 w-[22px] items-center justify-center">
          <Icon name="refresh" className="h-2 w-2" />
        </button>
        <button type="button" aria-label="Pause drawing" className="mr-0.5 flex h-4 w-3 items-center justify-center">
          <Icon name="pause" className="h-2 w-2" />
        </button>
        <Chevron dir="left" />
        <div className="h-3.5 flex-1 bg-[#cdcdcd]" />
        <Chevron dir="right" />
        <span className="w-[18px]" />
      </div>
    </main>
  );
}

/* one 19px column of the tool tree: vertical guide, optional branch and plus/minus box */
function Guide({ branch, box, last }) {
  return (
    <svg viewBox="0 0 19 18" className="h-[18px] w-[19px] shrink-0" aria-hidden="true">
      <path d={last ? 'M9.500 0V11' : 'M9.500 0V18'} stroke="#808080" strokeDasharray="1 1" />
      {branch && <path d="M10 11.500H19" stroke="#808080" strokeDasharray="1 1" />}
      {box && <ExpandBox open={box === 'open'} x={5.5} y={6.5} />}
    </svg>
  );
}

function TreeRow({ level, icon, label, box, last, selected }) {
  return (
    <li className="flex h-[18px] items-center whitespace-nowrap pl-[3px]">
      {level > 0 && <Guide />}
      {level > 1 && <Guide />}
      {box ? (
        <button type="button" aria-label={`Toggle ${label}`} className="shrink-0">
          <Guide branch box={box} />
        </button>
      ) : (
        <Guide branch last={last} />
      )}
      <Icon name={icon} className="ml-px h-4 w-4" />
      <span className={`ml-[3px] h-[18px] px-0.5 leading-[18px] ${selected ? 'bg-[#f0f0f0]' : ''}`}>{label}</span>
    </li>
  );
}

function ArcToolbox() {
  return (
    <aside className="flex w-[334px] shrink-0 flex-col">
      <PanelHeader title="ArcToolbox" />
      <div className="flex min-h-0 flex-1 border border-[#828790] bg-white pt-px">
        <ul className="min-h-0 flex-1 overflow-hidden">
          {TOOLBOXES.map((name) => (
            <TreeRow key={name} level={0} icon="toolbox" label={name} box="closed" />
          ))}
          <TreeRow level={0} icon="toolbox" label="Spatial Analyst Tools" box="open" />
          {TOOLSETS.map((name) => (
            <TreeRow key={name} level={1} icon="toolset" label={name} box="closed" />
          ))}
          <TreeRow level={1} icon="toolset" label="Surface" box="open" />
          {SURFACE_TOOLS.map((name) => (
            <TreeRow key={name} level={2} icon="hammer" label={name} last={name === 'Viewshed'} selected={name === 'Observer Points'} />
          ))}
          <TreeRow level={1} icon="toolset" label="" box="closed" />
        </ul>
        <div className="mr-px flex w-4 shrink-0 flex-col bg-[#f0f0f0]">
          <Chevron dir="up" />
          <div className="flex-[150]" />
          <div className="mr-px flex-[379] bg-[#cdcdcd]" />
          <div className="flex-[36]" />
          <Chevron dir="down" />
        </div>
      </div>
      <div className="flex h-5 shrink-0 items-start pl-[3px]">
        <button type="button" className="flex h-[19px] items-center gap-0.5 rounded-b border border-t-0 border-[#9a9a9a] px-1 text-[#6d6d6d]">
          <Icon name="resultsWin" />
          Results
        </button>
        <button type="button" className="flex h-[19px] items-center gap-1 rounded-b border border-t-0 border-[#9a9a9a] bg-white px-1">
          <Icon name="toolboxWin" />
          ArcToolbox
        </button>
      </div>
    </aside>
  );
}

function TitleBar() {
  return (
    <header className="flex h-[19px] shrink-0 items-start justify-between border-b border-[#6ba8dc] bg-[#8cc6fb]">
      <svg viewBox="0 0 18 18" className="-mt-0.5 ml-0.5 h-[18px] w-[18px]" aria-hidden="true">
        <circle cx="8" cy="8" r="8" fill="#1b4d75" />
        <path d="M1 6c2-4 5-4 6-3l-3 4l-2 3zM10 12l4-3l-1 5l-4 2z" fill="#58a65c" />
        <circle cx="9.500" cy="8" r="4.500" fill="#bfe4f5" stroke="#f2f6f8" strokeWidth="1.300" />
        <path d="M12.500 11.500l4 4.500" stroke="#5a3a20" strokeWidth="2.800" />
      </svg>
      <h1 className="ml-20 text-[14px] leading-[18px] text-[#222b35]">Sin título.mxd - ArcMap - ArcInfo</h1>
      <div className="mr-0.5 flex h-[15px]">
        <button type="button" aria-label="Minimize" className="flex w-[26px] items-center justify-center pt-0.5">
          <span className="h-0.5 w-2 bg-[#222]" />
        </button>
        <button type="button" aria-label="Restore" className="flex w-[26px] items-center justify-center">
          <svg viewBox="0 0 10 10" className="-mt-1 h-2.5 w-2.5" fill="none" stroke="#222">
            <path d="M2.500 2V0.500h7v7H8M0.500 3h7v6.500h-7zM0.500 3.500h7" />
          </svg>
        </button>
        <button type="button" aria-label="Close" className="ml-0.5 flex w-[45px] items-center justify-center bg-[#c75050]">
          <svg viewBox="0 0 8 8" className="-mt-1 h-2 w-2" stroke="#fff" strokeWidth="1.700">
            <path d="M0.500 0.500l7 7M7.500 0.500l-7 7" />
          </svg>
        </button>
      </div>
    </header>
  );
}

export default function App() {
  return (
    <div className="flex h-screen flex-col overflow-hidden bg-linear-to-r from-[#f0f0f0] to-[#fcfcfc] font-['Noto_Sans','Open_Sans',sans-serif] text-[11px] text-black">
      <TitleBar />

      <nav className="flex h-[25px] shrink-0 items-center gap-[17px] pl-3">
        {MENUS.map((name) => (
          <button key={name} type="button">{name}</button>
        ))}
      </nav>

      <div className="flex h-[26px] shrink-0 items-center pl-1">
        <div className="flex items-center bg-white/50 pl-0.5">
          <Grip />
          {tools(['new', 'open', 'save', 'print', '|', 'cut', 'copy', 'paste', 'del', '|', 'undo', 'redo', '|', 'add'])}
          <Caret />
          <span className="w-0.5" />
          <Sep />
          <div className="relative flex items-center">
            <select aria-label="Map scale" className="h-[21px] w-[149px] appearance-none border border-[#ababab] bg-white pl-0.5 leading-[19px]">
              <option>1:11,579</option>
            </select>
            <span className="pointer-events-none absolute right-0"><Chevron dir="down" /></span>
          </div>
          <Sep />
          {tools(['editTool', '|', 'tocWin', 'catalogWin', 'searchWin', 'toolboxWin', 'python', '|', 'model', '|', 'help'], 'editTool')}
        </div>
        <Overflow />
      </div>

      <div className="flex h-[26px] shrink-0 items-center pl-1">
        <div className="flex items-center bg-white/50 pl-0.5">
          <Grip />
          {tools(['zoomIn', 'zoomOut', 'pan', 'globe', '|', 'fixedIn', 'fixedOut', '|', 'back', 'fwd', '|', 'select'])}
          <Caret />
          <span className="w-0.5" />
          {tools(['clearSel', '|', 'pointer', '|', 'info', 'bolt', 'popup', '|', 'measure', '|', 'find', 'route', 'xy', '|', 'time', '|', 'viewer'], 'pointer')}
        </div>
        <Overflow />
        <div className="ml-1.5 flex items-center bg-white/50 pl-0.5">
          <Grip />
          <button type="button" className="flex items-center gap-0.5 px-1">
            Editor
            <Caret />
          </button>
          <Sep />
          {tools(['eArrow', 'eArrowA', '|', 'line', 'arc', 'trace'])}
          <Caret color="#9a9a9a" />
          <span className="w-0.5" />
          {tools(['point', '|', 'vertices', 'reshape', 'cutPoly', 'split', 'rotate', '|', 'attrs', 'sketch', '|', 'create'])}
        </div>
        <Overflow />
      </div>

      <div className="flex min-h-0 flex-1">
        <TableOfContents />
        <MapView />
        <ArcToolbox />
        <div className="ml-0.5 w-[19px] shrink-0 pt-0.5">
          <button type="button" className="flex h-[68px] w-[19px] flex-col items-center gap-0.5 rounded-l border border-r-0 border-[#9a9a9a] bg-[#f0f0f0] pt-1 text-xs leading-4 text-[#6d6d6d]">
            <Icon name="searchWin" />
            <span className="[writing-mode:vertical-rl]">Search</span>
          </button>
        </div>
      </div>

      <footer className="flex h-5 shrink-0 items-center justify-end border-b border-[#7a9cb8] bg-[#f0f0f0] pr-[87px] pt-1">
        <span className="whitespace-pre">382236.756  4158387.752 Meters</span>
      </footer>
    </div>
  );
}
